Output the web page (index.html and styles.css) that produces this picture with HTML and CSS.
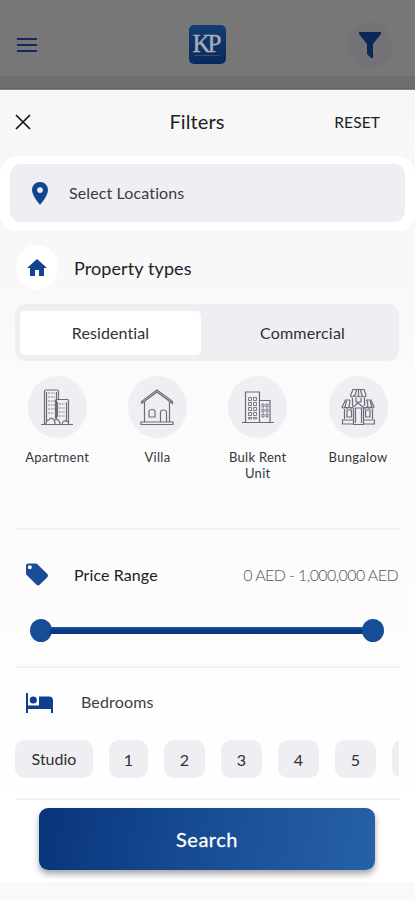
FILE: index.html
```html
<!DOCTYPE html>
<html lang="en">
<head>
<meta charset="utf-8">
<title>Filters</title>
<link rel="stylesheet" href="styles.css">
</head>
<body>
<div class="app">
  <header class="topbar">
    <svg class="menu" viewBox="0 0 20 16"><path d="M0 2h20M0 8h20M0 14h20"/></svg>
    <div class="logo"><span class="logo-text">KP</span><span class="logo-line"></span></div>
    <div class="filter-button"><svg viewBox="0 0 22 26"><path d="M0 0h22v2l-8 10v14h-2l-4-4V12L0 2z"/></svg></div>
  </header>
  <div class="backdrop"></div>
  <main class="sheet">
    <div class="sheet-header">
      <svg class="close" viewBox="0 0 16 16"><path d="M1 1l14 14M15 1L1 15"/></svg>
      <h1 class="title"><span>Filters</span></h1>
      <span class="reset">RESET</span>
    </div>
    <div class="location-card">
      <div class="location-field">
        <svg class="pin" viewBox="5 2 14 20"><path d="M12 2C8.1 2 5 5.1 5 9c0 5.2 7 13 7 13s7-7.800 7-13c0-3.900-3.100-7-7-7zm0 9.500a2.500 2.500 0 1 1 0-5 2.500 2.500 0 0 1 0 5z"/></svg>
        <span class="location-text">Select Locations</span>
      </div>
    </div>
    <div class="section-head property-head">
      <span class="round-icon"><svg class="home" viewBox="2 3 20 17"><path d="M10 20v-6h4v6h5v-8h3L12 3 2 12h3v8z"/></svg></span>
      <h2 class="property-title">Property types</h2>
    </div>
    <div class="tabs">
      <div class="tab tab-active"><span class="residential">Residential</span></div>
      <div class="tab"><span class="commercial">Commercial</span></div>
    </div>
    <div class="types">
      <div class="type">
        <div class="type-icon"><svg viewBox="0 0 34 38"><path d="M1 36.500h32M4.500 36V3.500Q4.500 2 6 2h11q1.500 0 1.500 1.500V11M6.500 4v30M16.500 4v27M15.500 31V12.500q0-1 1-1h11q1 0 1 1V36M17.500 14v15M26.500 14v19M6 36q0-4 3-4 1-3 4-1 2 1 2 5M15 32q4-2 5 4M22 36q1-5 6-2"/><path class="dots" d="M8 5h7M8 9h7M8 13h7M8 17h7M8 21h7M8 25h6M19 16h6M19 20h6M19 24h6M19 28h6"/></svg></div>
        <span class="type-label apartment">Apartment</span>
      </div>
      <div class="type">
        <div class="type-icon"><svg viewBox="0 0 34 38"><path d="M1.500 15.500v-2L17 2l15.500 11.500v2L17 4 1.500 15.500M4.500 14v20M29.500 14v20M1 34h32v2.500H1zM9 23.500q0-2 3-2t3 2V29H9zM20.500 34V24q0-2 3-2t3 2v10"/></svg></div>
        <span class="type-label villa">Villa</span>
      </div>
      <div class="type">
        <div class="type-icon"><svg viewBox="0 0 34 38"><path d="M1 34.500h32M4.500 34V4h14v30M18.500 12.500H29V34"/><path class="windows" d="M7.500 9.500h3v3h-3zm5 0h3v3h-3zm-5 5h3v3h-3zm5 0h3v3h-3zm-5 5h3v3h-3zm5 0h3v3h-3zm-5 5h3v3h-3zm5 0h3v3h-3zm-5 5h3v1.500h-3zm5 0h3v1.500h-3zM21 16h2v3h-2zm4 0h2v3h-2zm-4 5h2v3h-2zm4 0h2v3h-2zm-4 5h2v3h-2zm4 0h2v3h-2z"/></svg></div>
        <span class="type-label bulk">Bulk Rent<br>Unit</span>
      </div>
      <div class="type">
        <div class="type-icon"><svg viewBox="0 0 34 38"><path d="M12 1.500h11l2 5.500q0 2-1.700 2T21 7.500q-1 1.500-2 1.500t-1.500-1.500Q16.500 9 15.200 9T13 7.500Q12 9 11 9T9.500 7.500zM15.500 2L14 7.500M19.500 2L21 7.500M17.500 2v5.500M11.500 10v8M23.500 10v8M15 10v4h5v-4M9 12H4.500L1 19q1 2 3 0 2 2 4 0 2 2 4 0l5-4 5 4q2 2 4 0 2 2 4 0 2 2 3 0l-3-7h-5M5.500 13L4 19M9 12l-1 7M26 12l1 7M29 13l2 6M3.500 21v10M31.500 21v10M12.500 20v16M22.500 20v16M14.500 35V20h6v15M6 22h4.500v7H6zM24.500 22H29v7h-4.500zM1.500 32h11v4h-11zM22.500 32h11v4h-11zM12 36.500h11"/></svg></div>
        <span class="type-label bungalow">Bungalow</span>
      </div>
    </div>
    <div class="divider"></div>
    <div class="section-head price-head">
      <svg class="tag" viewBox="2 2 20 20"><path d="M21.400 11.600l-9-9C12 2.200 11.500 2 11 2H4c-1.100 0-2 .9-2 2v7c0 .6.200 1.100.6 1.400l9 9c.8.800 2 .8 2.800 0l7-7c.8-.8.800-2 0-2.800zM5.500 7.300a1.800 1.800 0 1 1 0-3.600 1.800 1.800 0 0 1 0 3.600z"/></svg>
      <h2 class="price-title">Price Range</h2>
      <span class="amount">0 AED - 1,000,000 AED</span>
    </div>
    <div class="slider"><span class="knob"></span><span class="track"></span><span class="knob"></span></div>
    <div class="divider"></div>
    <div class="section-head bed-head">
      <svg class="bed" viewBox="0 0 27 20"><path d="M0 0h2v12.500h11V3.500h10q4 0 4 4V20h-2v-4H2v4H0z"/><circle cx="7.300" cy="7" r="3.600"/></svg>
      <h2 class="bed-title">Bedrooms</h2>
    </div>
    <div class="chips">
      <span class="chip studio"><span>Studio</span></span><span class="chip first">1</span><span class="chip">2</span><span class="chip">3</span><span class="chip">4</span><span class="chip">5</span><span class="chip"></span>
    </div>
    <div class="divider"></div>
    <div class="action"><button class="search"><span>Search</span></button></div>
  </main>
</div>
</body>
</html>
```

FILE: styles.css
```css
* { box-sizing: border-box; }
body { margin: 0; font-family: Lato, "Open Sans", sans-serif; font-variant-ligatures: none; color: #202124; }
h1, h2 { margin: 0; font-weight: 400; }
svg { display: block; }
.app { width: 415px; height: 900px; overflow: hidden; background: #f9f9f9; }

.topbar { height: 76px; padding: 13px 23px 0 17px; background: #777; display: flex; align-items: center; justify-content: space-between; }
.menu { width: 20px; height: 16px; fill: none; stroke: #15285f; stroke-width: 1.900; }
.logo { width: 37px; height: 39px; margin-left: 29px; border-radius: 5px; background: linear-gradient(#123f6f, #09285d); display: flex; flex-direction: column; align-items: center; }
.logo-text { font: 25px/29px "Liberation Serif", serif; letter-spacing: -3px; color: #a7adb7; -webkit-text-stroke: .4px #a7adb7; margin: 4px 0 0 -3px; }
.logo-line { width: 26px; height: 1px; margin-top: -3px; background: #4c426a; }
.filter-button { width: 44px; height: 46px; border-radius: 50%; background: #737377; display: flex; align-items: center; justify-content: center; }
.filter-button svg { width: 22px; height: 26px; fill: #0b2859; }
.backdrop { height: 14px; background: linear-gradient(#6e6e6e 0 11px, #606060 13px, #aaa); }

.sheet { height: 792px; background: linear-gradient(#f7f7f7 0, #f8f8f8 190px, #fbfbfb 290px, #fdfdfd 600px, #fff 710px); }
.sheet-header { height: 66px; padding: 0 35px 3px 15px; display: grid; grid-template-columns: 60px 1fr 60px; align-items: center; }
.close { width: 16px; height: 16px; fill: none; stroke: #151515; stroke-width: 1.700; }
.title { padding-bottom: 1px; text-align: center; font-size: 20px; letter-spacing: .1px; }
.title span { margin-left: -1px; }
.reset { text-align: right; font-size: 15.500px; letter-spacing: .1px; white-space: nowrap; }
.location-card { height: 75px; padding: 8px 10px 9px; background: #fff; border-radius: 18px; }
.location-field { height: 58px; border-radius: 11px; padding: 0 0 1px 22px; background: #eeeef3; display: flex; align-items: center; }
.pin { width: 16px; height: 23px; margin-top: 1px; fill: #10468f; }
.location-text { margin-left: 21px; font-size: 16px; letter-spacing: .12px; color: #3b3c45; }

.section-head { display: flex; align-items: center; }
.property-head { height: 73px; padding-left: 16px; }
.round-icon { width: 42px; height: 45px; border-radius: 50%; background: #fff; display: flex; align-items: center; justify-content: center; }
.home { width: 20px; height: 19px; fill: #10468f; }
.property-title { margin-left: 16px; font-size: 18px; letter-spacing: .1px; }
.tabs { height: 57px; margin: 0 16px 0 15px; padding: 7px 5px 6px; border-radius: 11px; background: #eeeef3; display: flex; }
.tab { flex: 1; display: flex; align-items: center; justify-content: center; padding: 0 0 1px 10px; font-size: 16px; color: #303034; }
.tab-active { flex: 0 0 181px; padding-left: 0; border-radius: 5px; background: #fff; }
.residential { letter-spacing: .1px; }
.commercial { letter-spacing: .2px; }
.types { height: 167px; padding: 15px 7px 0; display: grid; grid-template-columns: repeat(4, 100.300px); }
.type { display: flex; flex-direction: column; align-items: center; }
.type-icon { width: 59px; height: 62px; border-radius: 50%; background: #eeeef3; display: flex; align-items: center; justify-content: center; }
.type-icon svg { width: 34px; height: 38px; fill: none; stroke: #6b6e78; stroke-width: 1.200; }
.type-icon .dots { stroke-width: 1; stroke-dasharray: 2 .7; opacity: .75; }
.type-icon .windows { stroke-width: .9; }
.type-label { margin-top: 11px; font-size: 13px; line-height: 16px; letter-spacing: .3px; text-align: center; color: #35363b; }
.divider { height: 2px; margin: 0 15px 0 16px; background: #f2f2f3; }

.price-head { height: 92px; padding: 0 16px 4px 26px; }
.tag { width: 22px; height: 23px; fill: #174c96; }
.price-title { margin-left: 26px; font-size: 16px; letter-spacing: .1px; }
.amount { margin-left: auto; margin-right: 1px; font-size: 16px; font-weight: 300; letter-spacing: -.6px; color: #55555b; }
.slider { height: 44px; padding: 0 31px 28px 30px; display: flex; align-items: center; }
.knob { width: 22px; height: 23px; border-radius: 50%; background: #174c96; flex: none; }
.track { flex: 1; height: 7px; margin: 0 -2px; background: linear-gradient(#28569c, #053987 50%, #063581); }
.bed-head { height: 72px; padding: 0 0 5px 26px; }
.bed { width: 27px; height: 20px; margin-top: 3px; fill: #123f8d; }
.bed-title { margin-left: 28px; font-size: 16px; letter-spacing: .15px; color: #3f3f42; }
.chips { height: 58px; margin: 0 16px 0 15px; display: flex; gap: 16px; overflow: hidden; }
.chip { flex: 0 0 41px; height: 38px; border-radius: 10px; background: #eeeef3; display: flex; align-items: center; justify-content: center; font-size: 16px; padding-top: 1px; color: #303034; }
.studio { flex-basis: 78px; padding: 0 0 1px; }
.first { flex-basis: 39px; }
.action { padding: 8px 40px 0 39px; }
.search { display: block; width: 336px; height: 62px; padding: 0; border: 0; border-radius: 9px; background: linear-gradient(100deg, #08357c, #184d94 50%, #2661a8); box-shadow: 0 4px 6px rgba(0,0,0,.35); color: #fff; font: 20px Lato, sans-serif; letter-spacing: .5px; -webkit-text-stroke: .3px #fff; }
```
